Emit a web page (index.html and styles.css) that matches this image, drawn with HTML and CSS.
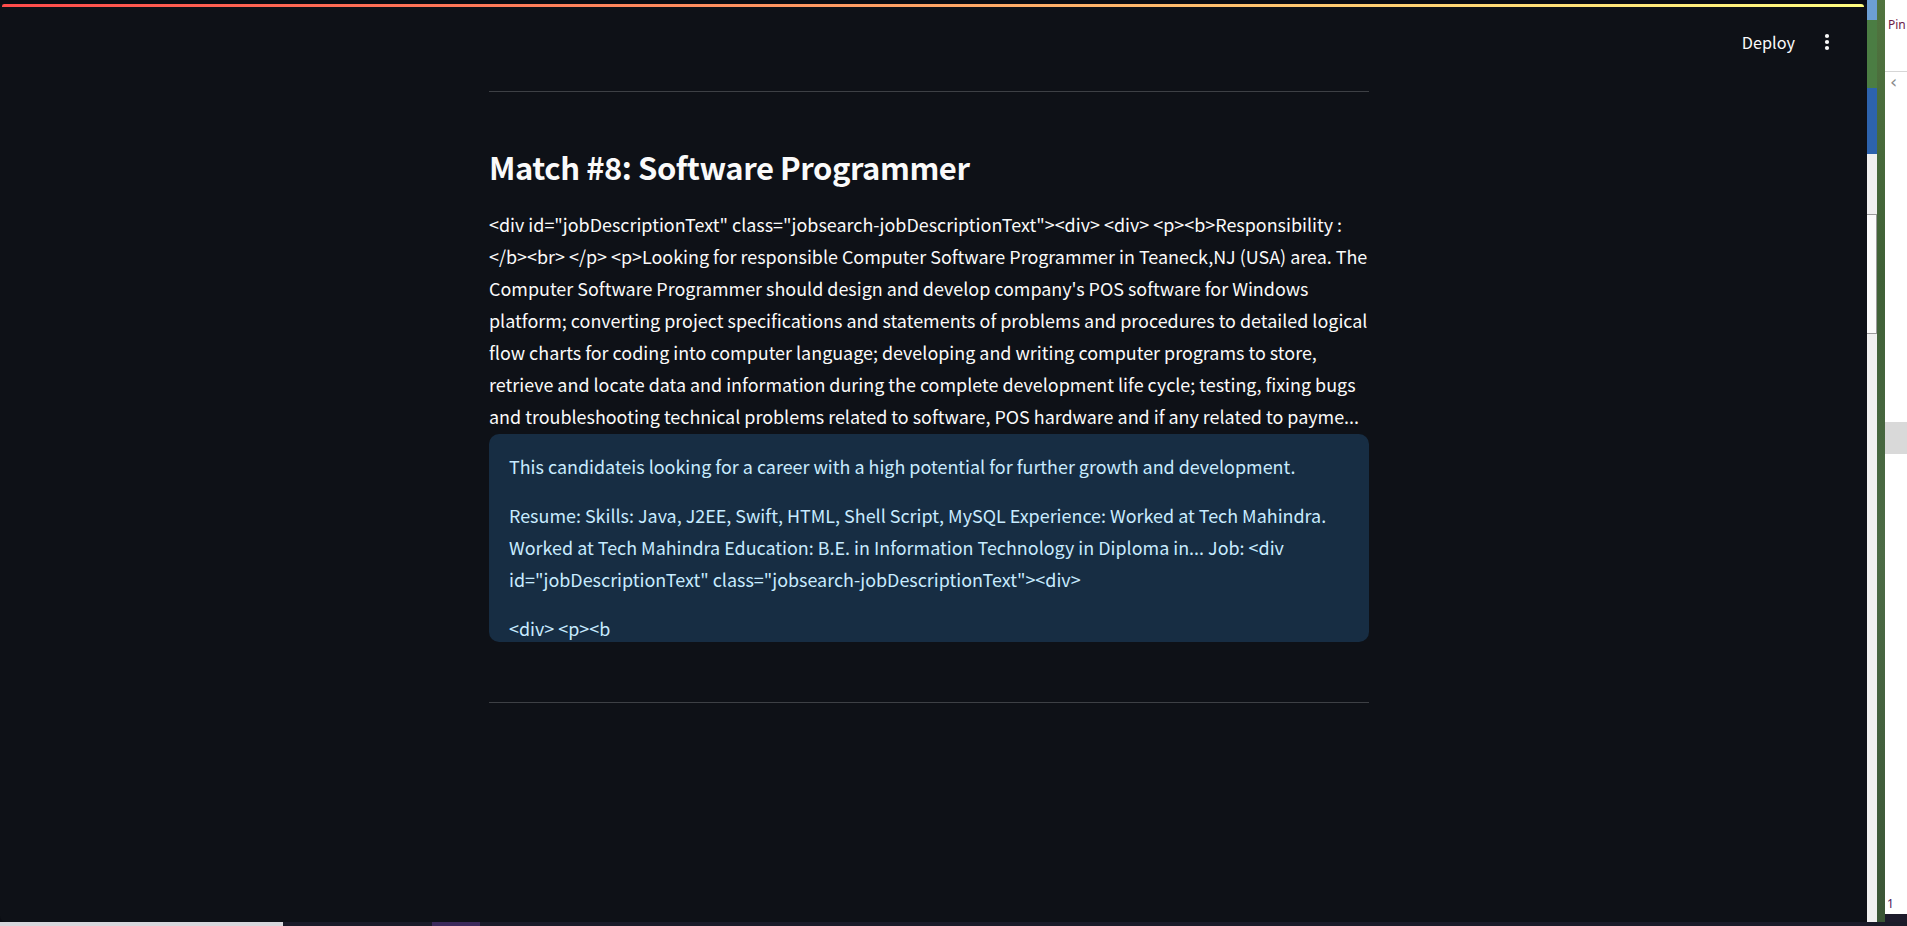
FILE: index.html
```html
<!DOCTYPE html>
<html lang="en">
<head>
<meta charset="utf-8">
<title>Job Matches</title>
<link rel="stylesheet" href="styles.css">
</head>
<body>
<div class="screen">
  <div class="row">
    <div class="app">
      <div class="topstrip"></div>
      <div class="decoration"></div>
      <header class="topbar">
        <button class="deploy">Deploy</button>
        <button class="kebab" aria-label="Main menu">
          <svg width="6" height="18" viewBox="0 0 6 18"><circle cx="3" cy="3" r="2.1" fill="#fafafa"/><circle cx="3" cy="9" r="2.1" fill="#fafafa"/><circle cx="3" cy="15" r="2.1" fill="#fafafa"/></svg>
        </button>
      </header>
      <div class="main-wrap">
        <main class="block">
          <hr class="divider">
          <h3 class="match-title">Match #8: Software Programmer</h3>
          <p class="desc">&lt;div id="jobDescriptionText" class="jobsearch-jobDescriptionText"&gt;&lt;div&gt; &lt;div&gt; &lt;p&gt;&lt;b&gt;Responsibility : &lt;/b&gt;&lt;br&gt; &lt;/p&gt; &lt;p&gt;Looking for responsible Computer Software Programmer in Teaneck,NJ (USA) area. The Computer Software Programmer should design and develop company's POS software for Windows platform; converting project specifications and statements of problems and procedures to detailed logical flow charts for coding into computer language; developing and writing computer programs to store, retrieve and locate data and information during the complete development life cycle; testing, fixing bugs and troubleshooting technical problems related to software, POS hardware and if any related to payme...</p>
          <div class="info">
            <p>This candidateis looking for a career with a high potential for further growth and development.</p>
            <p>Resume: Skills: Java, J2EE, Swift, HTML, Shell Script, MySQL Experience: Worked at Tech Mahindra. Worked at Tech Mahindra Education: B.E. in Information Technology in Diploma in... Job: &lt;div id="jobDescriptionText" class="jobsearch-jobDescriptionText"&gt;&lt;div&gt;</p>
            <p>&lt;div&gt; &lt;p&gt;&lt;b</p>
          </div>
          <hr class="divider divider-bottom">
        </main>
        <div class="scroll-gutter"></div>
      </div>
    </div>
    <div class="desktop">
      <div class="win-a">
        <div class="win-a-top"></div>
        <div class="win-a-title"></div>
        <div class="win-a-body">
          <div class="win-a-field"></div>
        </div>
      </div>
      <div class="tree"></div>
      <div class="win-c">
        <div class="win-c-head"><span class="win-c-label">Pin</span></div>
        <div class="win-c-back">&lsaquo;</div>
        <div class="win-c-sel"></div>
        <div class="win-c-num">1</div>
      </div>
    </div>
  </div>
  <div class="taskbar">
    <div class="tb-light"></div>
    <div class="tb-gap"></div>
    <div class="tb-purple"></div>
  </div>
</div>
</body>
</html>
```
FILE: styles.css
```css
* { box-sizing: border-box; }

html, body {
  margin: 0;
  padding: 0;
  width: 1907px;
  height: 926px;
  overflow: hidden;
  background: #0a0c12;
  font-family: "Noto Sans CJK SC", "Noto Sans", sans-serif;
}

.screen {
  display: flex;
  flex-direction: column;
  width: 1907px;
  height: 926px;
}

.row {
  display: flex;
  height: 922px;
}

.app {
  width: 1867px;
  height: 922px;
  background: #0e1117;
  display: flex;
  flex-direction: column;
  border-bottom-left-radius: 6px;
  overflow: hidden;
}

.topstrip {
  height: 4px;
  background: #0a0c13;
}

.decoration {
  height: 3px;
  margin: 0 3px 0 2px;
  border-radius: 3px 4px 0 0;
  background: linear-gradient(90deg, #ff4b4b, #fffd80);
}

.topbar {
  height: 70px;
  display: flex;
  justify-content: flex-end;
  align-items: center;
  padding-right: 24px;
  gap: 4px;
}

.deploy {
  background: none;
  border: none;
  color: #fafafa;
  font-family: inherit;
  font-size: 16.3px;
  padding: 0 12px;
  height: 40px;
  line-height: 40px;
  cursor: pointer;
}

.kebab {
  width: 32px;
  height: 40px;
  background: none;
  border: none;
  padding: 0;
  display: flex;
  align-items: center;
  justify-content: center;
}

.main-wrap {
  flex: 1;
  display: flex;
}

.block {
  flex: 1;
  display: flex;
  flex-direction: column;
  align-items: stretch;
  max-width: 880px;
  margin: 0 auto;
  padding-top: 14px;
  color: #fafafa;
}

.scroll-gutter {
  width: 9px;
}

.divider {
  margin: 0;
  border: none;
  height: 1px;
  background: #3d4045;
}

.divider-bottom {
  margin-top: 60px;
}

.match-title {
  margin: 54px 0 0;
  font-size: 31px;
  line-height: 42px;
  font-weight: 700;
  letter-spacing: -0.45px;
  color: #fafafa;
}

.desc {
  margin: 20px 0 0;
  font-size: 17.93px;
  line-height: 32px;
}

.info {
  margin-top: 2px;
  background: #172d43;
  color: #c7ebff;
  border-radius: 10px;
  padding: 16px 20px 0;
  font-size: 17.93px;
  line-height: 32px;
}

.info p {
  margin: 0 0 17px;
}

.info p + p + p {
  margin-top: 8px;
}

.info p:last-child {
  margin-bottom: -2px;
}

/* leftovers of the desktop on the right edge */
.desktop {
  width: 40px;
  height: 922px;
  display: flex;
}

.win-a {
  width: 10px;
  display: flex;
  flex-direction: column;
  background: #f0f0f0;
}

.win-a-top {
  height: 20px;
  background: #6c9fd4;
}

.win-a-title {
  height: 68px;
  background: #4b7d43;
}

.win-a-body {
  flex: 1;
  background: #f0f0f0;
}

.win-a-body::before {
  content: "";
  display: block;
  height: 66px;
  background: #2d63ad;
}

.win-a-field {
  margin-top: 60px;
  height: 120px;
  border: 1px solid #9a9a9a;
  border-left: none;
  background: #fbfbfb;
}

.tree {
  width: 8px;
  background: linear-gradient(180deg, #51743f 0%, #3f6036 30%, #4c6b45 60%, #3a5535 100%);
}

.win-c {
  width: 22px;
  background: #ffffff;
  display: flex;
  flex-direction: column;
  border-bottom: 8px solid #1d1b2b;
}

.win-c-head {
  height: 72px;
  border-bottom: 1px solid #d6d6d6;
  padding: 10px 0 0 3px;
}

.win-c-label {
  font-family: "Noto Sans", sans-serif;
  font-size: 12px;
  color: #6b1a48;
}

.win-c-back {
  font-family: "DejaVu Sans", sans-serif;
  font-size: 18px;
  line-height: 20px;
  color: #8a8a8a;
  padding-left: 5px;
}

.win-c-sel {
  margin-top: 330px;
  height: 32px;
  background: #d9d9d9;
}

.win-c-num {
  margin-top: auto;
  font-family: "Noto Sans", sans-serif;
  font-size: 12px;
  color: #4b1a5e;
  padding: 0 0 2px 2px;
}

.taskbar {
  height: 4px;
  display: flex;
  background: #1a1b29;
}

.tb-light {
  width: 283px;
  background: #d7d7dc;
}

.tb-gap {
  width: 149px;
}

.tb-purple {
  width: 48px;
  background: #3c2a5c;
}
```
